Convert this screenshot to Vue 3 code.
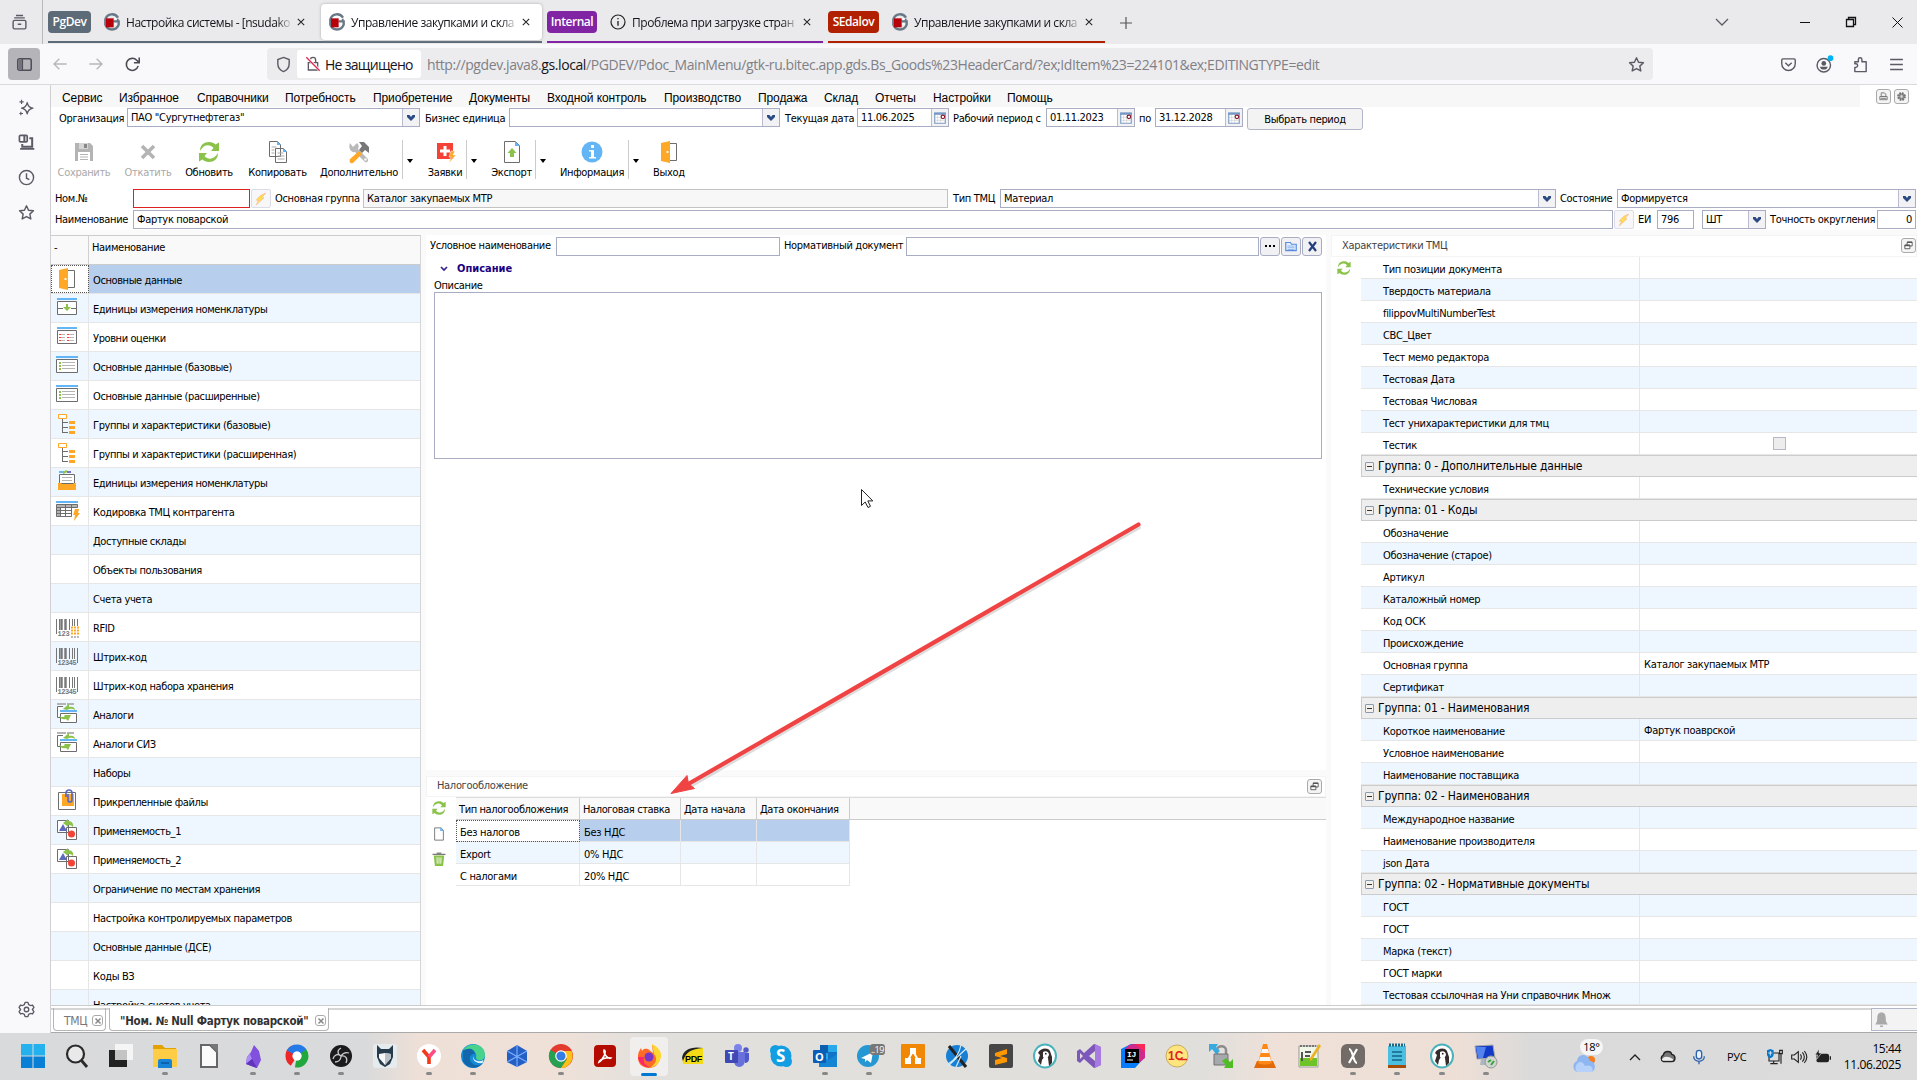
<script setup>
const tabs = [
  { group: 'PgDev', color: '#5d6a78', width: 494, gap: 5, items: [
    { icon: 'gs', title: 'Настройка системы - [nsudako' },
    { icon: 'gs', title: 'Управление закупками и скла', active: true } ] },
  { group: 'Internal', color: '#8124a4', width: 276, gap: 5, items: [{ icon: 'info', title: 'Проблема при загрузке стран' }] },
  { group: 'SEdalov', color: '#b12000', width: 277, gap: 5, items: [{ icon: 'gs', title: 'Управление закупками и скла' }] },
]
const menu = [['Сервис', 57], ['Избранное', 78], ['Справочники', 88], ['Потребность', 88], ['Приобретение', 96], ['Документы', 78], ['Входной контроль', 117], ['Производство', 94], ['Продажа', 66], ['Склад', 51], ['Отчеты', 58], ['Настройки', 74], ['Помощь', 60]]
const rows = [
  { cls: 'r1', items: [
    { k: 'label', t: 'Организация', w: 68, g: 8 }, { k: 'select', t: 'ПАО "Сургутнефтегаз"', w: 293 },
    { k: 'label', t: 'Бизнес единица', w: 84, g: 5 }, { k: 'select', t: '', w: 271 },
    { k: 'label', t: 'Текущая дата', w: 72, g: 5 }, { k: 'date', t: '11.06.2025', w: 92 },
    { k: 'label', t: 'Рабочий период с', w: 93, g: 4 }, { k: 'date', t: '01.11.2023', w: 89 },
    { k: 'label', t: 'по', w: 16, g: 4 }, { k: 'date', t: '31.12.2028', w: 88 },
    { k: 'btn', t: 'Выбрать период', w: 116, g: 4 } ] },
  { cls: 'r2', items: [
    { k: 'label', t: 'Ном.№', w: 78, g: 4 }, { k: 'input red', t: '', w: 117 }, { k: 'flash', w: 20, g: 1 },
    { k: 'label', t: 'Основная группа', w: 88, g: 4 }, { k: 'input ro', t: 'Каталог закупаемых МТР', w: 585 },
    { k: 'label', t: 'Тип ТМЦ', w: 47, g: 5 }, { k: 'select', t: 'Материал', w: 556 },
    { k: 'label', t: 'Состояние', w: 57, g: 4 }, { k: 'select', t: 'Формируется', w: 299 } ] },
  { cls: 'r3', items: [
    { k: 'label', t: 'Наименование', w: 78, g: 4 }, { k: 'input', t: 'Фартук поварской', w: 1480 }, { k: 'flash', w: 20, g: 1 },
    { k: 'label', t: 'ЕИ', w: 19, g: 4 }, { k: 'input', t: '796', w: 37 }, { k: 'select', t: 'ШТ', w: 64, g: 8 },
    { k: 'label', t: 'Точность округления', w: 107, g: 4 }, { k: 'input num', t: '0', w: 39 } ] },
]
const tools = [
  { t: 'Сохранить', i: 'save', w: 66, off: true, g: 0 }, { t: 'Откатить', i: 'cancel', w: 62, off: true }, { t: 'Обновить', i: 'refresh', w: 60 },
  { t: 'Копировать', i: 'copy', w: 77 }, { t: 'Дополнительно', i: 'tools', w: 86, d: 1 }, { t: 'Заявки', i: 'req', w: 42, g: 6, d: 1 },
  { t: 'Экспорт', i: 'export', w: 47, g: 6, d: 1 }, { t: 'Информация', i: 'about', w: 72, g: 5, d: 1 }, { t: 'Выход', i: 'door', w: 40, g: 5 },
]
const sections = [
  ['door', 'Основные данные'], ['units', 'Единицы измерения номенклатуры'], ['levels', 'Уровни оценки'], ['form', 'Основные данные (базовые)'],
  ['form', 'Основные данные (расширенные)'], ['tree', 'Группы и характеристики (базовые)'], ['tree', 'Группы и характеристики (расширенная)'],
  ['box', 'Единицы измерения номенклатуры'], ['grid', 'Кодировка ТМЦ контрагента'], ['', 'Доступные склады'], ['', 'Объекты пользования'], ['', 'Счета учета'],
  ['rfid', 'RFID'], ['bar', 'Штрих-код'], ['bar', 'Штрих-код набора хранения'], ['analog', 'Аналоги'], ['analog', 'Аналоги СИЗ'], ['', 'Наборы'],
  ['clip', 'Прикрепленные файлы'], ['apply', 'Применяемость_1'], ['apply', 'Применяемость_2'], ['', 'Ограничение по местам хранения'],
  ['', 'Настройка контролируемых параметров'], ['', 'Основные данные (ДСЕ)'], ['', 'Коды ВЗ'], ['', 'Настройка счетов учета'],
]
const props = [
  'Тип позиции документа', 'Твердость материала', 'filippovMultiNumberTest', 'СВС_Цвет', 'Тест мемо редактора', 'Тестовая Дата', 'Тестовая Числовая',
  'Тест унихарактеристики для тмц', 'Тестик', '#Группа: 0 - Дополнительные данные', 'Технические условия', '#Группа: 01 - Коды', 'Обозначение',
  'Обозначение (старое)', 'Артикул', 'Каталожный номер', 'Код ОСК', 'Происхождение', 'Основная группа', 'Сертификат', '#Группа: 01 - Наименования',
  'Короткое наименование', 'Условное наименование', 'Наименование поставщика', '#Группа: 02 - Наименования', 'Международное название',
  'Наименование производителя', 'json Дата', '#Группа: 02 - Нормативные документы', 'ГОСТ', 'ГОСТ', 'Марка (текст)', 'ГОСТ марки',
  'Тестовая ссылочная на Уни справочник Множ',
]
const values = { 'Основная группа': 'Каталог закупаемых МТР', 'Короткое наименование': 'Фартук поаврской' }
const taxes = [['Без налогов', 'Без НДС'], ['Export', '0% НДС'], ['С налогами', '20% НДС']]
const side = ['spark', 'devices', 'clock', 'star']
const apps = [['win'], ['search'], ['desk'], ['folder', 1], ['libre'], ['obsidian', 1], ['share', 1], ['obs', 1], ['wolf'], ['yandex', 1], ['edge', 1], ['gem'], ['chrome', 1], ['acrobat'], ['firefox', 2], ['pdf'], ['teams'], ['skype'], ['outlook', 1], ['telegram', 1], ['drawio'], ['dbtool'], ['sublime'], ['dbeaver'], ['vs'], ['idea'], ['onec'], ['winscp'], ['vlc'], ['npp'], ['xapp', 1], ['notepad', 1], ['dbeaver', 1], ['rdp', 1]]

const bars = 'M1.500 4v15M4.500 4v11M14.500 4v11M17.500 4v11M19.500 4v11M22.500 4v15'
const wideBars = 'M6.500 4v11M10.500 4v11'
const ico = {
  gs: '<path d="M21 5.500A10.500 10.500 0 0 0 2 8v8a10.500 10.500 0 0 0 20 0v-5h-8" fill="none" stroke="#697886" stroke-width="3.600"/><path d="M19 7l3 0v4h-3z" fill="#697886"/><path d="M3 6.500h11.500V20H3z" fill="#b8000b"/><path d="M16 7.500h3M16 15h2.500" stroke="#fff" stroke-width="2"/>',
  info: '<circle cx="12" cy="12" r="10.500" fill="none" stroke="#222" stroke-width="1.800"/><path d="M12 10.500v7M12 6v2" stroke="#222" stroke-width="2"/>',
  archive: '<path d="M5 9h14a2 2 0 0 1 2 2v8a2 2 0 0 1-2 2H5a2 2 0 0 1-2-2v-8a2 2 0 0 1 2-2zM4.500 5.500h15M7 2h10M9.500 14.500h5" fill="none" stroke="#5b5b66" stroke-width="2"/>',
  sidebar: '<rect x="2.500" y="4" width="19" height="16" rx="2.500" fill="none" stroke="#4f4f5a" stroke-width="2.200"/><path d="M4 5h4v14H4z" fill="#72727c"/><path d="M9 4v16" stroke="#4f4f5a" stroke-width="2"/>',
  back: '<path d="M22 12H3M11 4l-8 8 8 8" fill="none" stroke="#b6b6bc" stroke-width="2"/>',
  fwd: '<path d="M2 12h19M13 4l8 8-8 8" fill="none" stroke="#b6b6bc" stroke-width="2"/>',
  reload: '<path d="M20 14a8.500 8.500 0 1 1-2-8l3 3M21.500 2v7.500H14" fill="none" stroke="#4b4b55" stroke-width="2.200"/>',
  shield: '<path d="M12 2l8 3v6c0 5-3 9-8 11-5-2-8-6-8-11V5z" fill="none" stroke="#5b5b66" stroke-width="2"/>',
  lock: '<path d="M5 10h14v11H5zM8 10V6a4 4 0 0 1 8 0v4" fill="none" stroke="#5b5b66" stroke-width="2"/><path d="M3 2l19 20" stroke="#fff" stroke-width="4"/><path d="M2 2l20 20" stroke="#e22850" stroke-width="2"/>',
  star: '<path d="M12 2.500l2.900 6.300 6.900.800-5.100 4.700 1.400 6.800-6.100-3.400-6.100 3.400 1.400-6.800L2.200 9.600l6.900-.800z" fill="none" stroke="#5b5b66" stroke-width="2" stroke-linejoin="round"/>',
  pocket: '<path d="M4 4h16a1.500 1.500 0 0 1 1.500 1.500V11a9.500 9.500 0 0 1-19 0V5.500A1.500 1.500 0 0 1 4 4z" fill="none" stroke="#5b5b66" stroke-width="2"/><path d="M7.500 9.500l4.500 4.200 4.500-4.200" fill="none" stroke="#5b5b66" stroke-width="2"/>',
  account: '<circle cx="11" cy="13" r="9.500" fill="none" stroke="#5b5b66" stroke-width="2"/><circle cx="11" cy="10.500" r="3.300" fill="#5b5b66"/><path d="M5.500 15h11c-.5 3-2.500 4-5.500 4s-5-1-5.500-4z" fill="#5b5b66"/><circle cx="20.500" cy="3" r="4" fill="#00b3f4"/>',
  puzzle: '<path d="M4 21v-5h1.500a2.500 2.500 0 0 0 0-5H4V8h5V5a2.500 2.500 0 0 1 5 0v3h6v14H4z" fill="none" stroke="#5b5b66" stroke-width="2" stroke-linejoin="round"/>',
  burger: '<path d="M3 5h18M3 12h18M3 19h18" stroke="#5b5b66" stroke-width="2"/>',
  spark: '<path d="M13 5c1 5 3 7 8 8-5 1-7 3-8 8-1-5-3-7-8-8 5-1 7-3 8-8z" fill="none" stroke="#5b5b66" stroke-width="1.900" stroke-linejoin="round"/><path d="M5 1v6M2 4h6M4 18v5M2 20.500h5" stroke="#5b5b66" stroke-width="1.600"/>',
  devices: '<rect x="2" y="2" width="11" height="9" rx="1.500" fill="none" stroke="#5b5b66" stroke-width="2.400"/><path d="M9 2v9M16 6h4v12H6v-4M3 21h20" fill="none" stroke="#5b5b66" stroke-width="2.800"/>',
  clock: '<circle cx="12" cy="12" r="10" fill="none" stroke="#5b5b66" stroke-width="2"/><path d="M12 6v7l4 2" fill="none" stroke="#5b5b66" stroke-width="2"/>',
  gear: '<path d="M10 2h4l1 3 2.500 1.400 3-.7 2 3.400L20.300 12l2.200 2.900-2 3.400-3-.7L15 19l-1 3h-4l-1-3-2.500-1.400-3 .7-2-3.400L3.700 12 1.500 9.100l2-3.400 3 .7L9 5z" fill="none" stroke="#5b5b66" stroke-width="1.900" stroke-linejoin="round"/><circle cx="12" cy="12" r="3.200" fill="none" stroke="#5b5b66" stroke-width="1.900"/>',
  save: '<path d="M3 3h15l3 3v15H3z" fill="#b4b4b4"/><path d="M6 12h12v9H6z" fill="#fff"/><path d="M8 14.500h8M8 17h8M8 19.500h8" stroke="#b4b4b4"/><path d="M7 3h9v6H7z" fill="#d5d5d5"/><path d="M12 4h3v4h-3z" fill="#888"/>',
  cancel: '<path d="M6 6l12 12M18 6L6 18" stroke="#b4b4b4" stroke-width="3.600"/>',
  refresh: '<path d="M3 11C3 5 7 2 12 2c3 0 5 1 6.500 2.500L22 2.500V11h-8l2.500-3C13 4 7 4 3 11z" fill="#8bc34a"/><path d="M21 13c0 6-4 9-9 9-3 0-5-1-6.500-2.500L2 21.500V13h8l-2.500 3C11 20 17 20 21 13z" fill="#8bc34a"/>',
  copy: '<path d="M3.500 1.500h8l3 3v12h-11zM9.500 8.500h8l3 3v11h-11z" fill="#fff" stroke="#6d6d6d"/><path d="M11 1l4 4h-4zM17 8l4 4h-4z" fill="#64b5f6"/><path d="M5.500 7h5M5.500 10h3M5.500 13h3M11.500 13h6M11.500 16h7M11.500 19h7" stroke="#aaa"/>',
  tools: '<path d="M3 3l3 4 4-4c2 2 2 4 1 6l9 9c3 3-1 6-3 3l-9-9C4 13 1 8 3 3z" fill="#b9b9b9"/><path d="M12 11l3 3-9 9c-3 1-4-1-3-4z" fill="#ffa726"/><path d="M12 2h5l5 5v6l-4-3-3 3-3-3 3-4z" fill="#777"/><circle cx="18.500" cy="19.500" r="1.200" fill="#fff"/>',
  req: '<path d="M4 3h16v16H4z" fill="#f44336"/><path d="M12 6v10M7 11h10" stroke="#fff" stroke-width="3"/><path d="M18 11h4l-2 4h3l-7 8 2-6h-2z" fill="#ffa726" stroke="#fff" stroke-width=".5"/>',
  export: '<path d="M4.500 1.500h11l4 4v17h-15z" fill="#fff" stroke="#6d6d6d"/><path d="M15 1l5 5h-5z" fill="#64b5f6"/><path d="M12 8l4.500 5H14v4h-4v-4H7.500z" fill="#8bc34a"/>',
  about: '<circle cx="12" cy="12" r="10.500" fill="#64b5f6"/><path d="M11 5h3v3h-3zM9 10h5v7h2v1.500H9V17h2v-5.500H9z" fill="#fff"/>',
  door: '<path d="M12 3.500h7.500v17H12" fill="#fff" stroke="#6d6d6d"/><path d="M4 3l9-2v22l-9-2z" fill="#ffa726"/><path d="M9.500 11h2v2h-2z" fill="#fff"/>',
  units: '<path d="M2 3h20" stroke="#64b5f6" stroke-width="2"/><path d="M2.500 5.500h19v13h-19zM3 12.500h5M16 12.500h5" fill="#fff" stroke="#6d6d6d"/><path d="M11 8h2v3h3l-4 4-4-4h3z" fill="#8bc34a"/>',
  levels: '<path d="M2 3h20" stroke="#64b5f6" stroke-width="2"/><path d="M2.500 5.500h19v13h-19z" fill="#fff" stroke="#6d6d6d"/><path d="M6 9.500h4M6 12.500h4M6 15.500h4M14 9.500h5M14 12.500h5M14 15.500h5" stroke="#b9b9b9"/><path d="M4 9.500h2M4 12.500h2M4 15.500h2M12 9.500h2M12 12.500h2M12 15.500h2" stroke="#f44336"/>',
  form: '<path d="M1 3h22" stroke="#64b5f6" stroke-width="2"/><path d="M1.500 5.500h21v13h-21z" fill="#fff" stroke="#6d6d6d"/><path d="M7 8.500h13M7 11.500h13M7 14.500h13" stroke="#b4b4b4"/><path d="M4 9h2M4 12h2M4 15h2" stroke="#8bc34a" stroke-width="2"/>',
  tree: '<path d="M3.500 2.500h8v4h-8z" fill="#fff" stroke="#ffa726"/><path d="M7.500 7v14M8 10.500h5M8 15.500h5M8 20.500h5" stroke="#6d6d6d" fill="none"/><path d="M14 9h6v3h-6zM14 14h6v3h-6zM14 19h6v3h-6z" fill="#ffa726"/>',
  box: '<path d="M4 2h5" fill="none" stroke="#64b5f6" stroke-width="2"/><path d="M8 3l4-2" stroke="#8bc34a" stroke-width="2"/><path d="M12 2h4" stroke="#7e70c4" stroke-width="2"/><path d="M4.500 4.500h15v9h-15z" fill="#fff" stroke="#6d6d6d"/><path d="M7 7.500h10M7 10.500h10" stroke="#b4b4b4"/><path d="M3 13h3l1 1h11l1-1h2v7H3z" fill="#ffa726"/>',
  grid: '<path d="M1 3h22" stroke="#64b5f6" stroke-width="2"/><path d="M1.500 5.500h21v3h-21zM1.500 8.500h4v9h-4z" fill="#b4b4b4" stroke="#6d6d6d"/><path d="M5.500 8.500h11v9h-11zM1.500 11.500h15M1.500 14.500h15M10.500 5.500v12M16.500 5.500v3" fill="none" stroke="#6d6d6d"/><path d="M20 10h4l-1 4h2l-6 8 1-6h-2z" fill="#ffa726"/>',
  bar: `<path d="${bars}" stroke="#777"/><path d="${wideBars}" stroke="#777" stroke-width="2.400"/><text x="2.500" y="21" font-size="7" font-weight="bold" font-family="Liberation Mono,monospace" fill="#777" textLength="19">12345</text>`,
  rfid: `<path d="${bars}" stroke="#777"/><path d="${wideBars}" stroke="#777" stroke-width="2.400"/><path d="M15 11h9v11h-9z" fill="#fff"/><text x="2.500" y="21" font-size="7" font-weight="bold" font-family="Liberation Mono,monospace" fill="#777" textLength="12">123</text><path d="M16 12.500h8M16 15.500h8M16 18.500h8" stroke="#ffa726" stroke-width="2" stroke-dasharray="2 1"/><path d="M16 22h8" stroke="#777" stroke-dasharray="2 1"/>`,
  analog: '<path d="M2 2h17" stroke="#b4b4b4" stroke-width="2" stroke-dasharray="9 1"/><path d="M8 4.500H2.500v11H5M5.500 11.500h16v9h-16z" fill="#fff" stroke="#6d6d6d"/><path d="M5 9h17" stroke="#64b5f6" stroke-width="2"/><path d="M8 7l6-5v3c4-1 6 1 6 3-3-2-6-1-8 0zM4 13c2 3 5 2 6 1l-1-1h7l-3 6-2-2c-4 1-6-1-7-4z" fill="#8bc34a"/>',
  clip: '<path d="M3.500 3.500h17v17h-17z" fill="#fff" stroke="#6d6d6d"/><path d="M7 5h12v12H7z" fill="#ffa726"/><path d="M11 8V4a3 3 0 0 1 6 0v7a2 2 0 0 1-4 0V5" fill="none" stroke="#5c6bc0" stroke-width="1.700"/>',
  apply: '<path d="M2.500 2.500h11v12h-11zM11.500 9.500h10v12h-10z" fill="#fff" stroke="#6d6d6d"/><path d="M4 13l4-7 4 7z" fill="#5c6bc0"/><circle cx="16.500" cy="16" r="3.500" fill="#f44336"/><path d="M8 5l5-4v2c4 0 6 3 5 6-2-2-3-2-5-2v2z" fill="#8bc34a"/>',
  doc: '<path d="M4.500 1.500h11l4 4v17h-15z" fill="#fff" stroke="#6d6d6d" stroke-width="1.500"/><path d="M14 1l6 6h-6z" fill="#64b5f6"/>',
  trash: '<path d="M1 4h22" stroke="#6d6d6d" stroke-width="2"/><path d="M8 2h8" stroke="#6d6d6d" stroke-width="2"/><path d="M3 6h18l-2 18H5z" fill="#8bc34a"/><path d="M8.500 9l.5 11M12 9v11M15.500 9l-.5 11" stroke="#fff" stroke-width="1.500"/>',
  cal: '<path d="M3 4h18v17H3z" fill="#fff" stroke="#7c9cc4" stroke-width="2"/><path d="M2 4.500h20" stroke="#7598c6" stroke-width="4"/><path d="M4 11h16M4 16h16M8 7v13M13 7v13" stroke="#c9c9c9"/><circle cx="17" cy="10" r="3" fill="#fff" stroke="#8b1a2b" stroke-width="2"/>',
  flash: '<path d="M20 2l-7 8h4L4 22l4-8H4l7-8z" fill="#ffe14a" stroke="#f7b98a" stroke-width="1.300"/>',
  restore: '<path d="M9 5h11v8H9z" fill="#fff" stroke="#555" stroke-width="2"/><path d="M4 11h11v8H4z" fill="#fff" stroke="#555" stroke-width="2"/><path d="M9 5h11M4 12h11" stroke="#555" stroke-width="3"/>',
  print: '<path d="M7 4h7l3 3v5H7zM4 12h16v7H4zM6 16h12" fill="#eee" stroke="#777" stroke-width="2"/>',
  cog: '<circle cx="12" cy="12" r="7" fill="#999" stroke="#6f6f6f" stroke-width="5" stroke-dasharray="3.500 2"/><circle cx="12" cy="12" r="2.500" fill="#ddd"/>',
  list: '<path d="M3 6h8l2 3h8v11H3z" fill="#e3efff" stroke="#5b8ddb" stroke-width="2"/><path d="M6 12h12M6 15h12M6 18h12" stroke="#5b8ddb"/>',
  bell: '<path d="M12 2c-5 0-6 4-6 9 0 4-1 6-3 8h18c-2-2-3-4-3-8 0-5-1-9-6-9zM10 20.500h4v2h-4z" fill="#a9a9a9"/>',
  win: '<path d="M0 0h11.500v11.500H0zM12.500 0H24v11.500H12.500z" fill="#25b0ee"/><path d="M0 12.500h11.500V24H0zM12.500 12.500H24V24H12.500z" fill="#0a7fd6"/>',
  search: '<circle cx="10.500" cy="10" r="8.500" fill="#e9e9e9" stroke="#2a2a2a" stroke-width="2.200"/><path d="M16.500 16.500L22 23" stroke="#2a2a2a" stroke-width="2.800"/>',
  desk: '<path d="M0 6h18v17H0z" fill="#222"/><path d="M6 0h18v16H6z" fill="#f5f5f5"/><path d="M6 6h12v10H6z" fill="#c4c4c4"/>',
  folder: '<path d="M0 1h9l3 3h11v8H0z" fill="#e2a200"/><path d="M0 5h24v18H0z" fill="#ffcd45"/><path d="M5 24v-7a2 2 0 0 1 2-2h10a2 2 0 0 1 2 2v7z" fill="#1884d8"/><path d="M8 19h8" stroke="#075a9d" stroke-width="1.500"/>',
  libre: '<path d="M4 1h9l7 7v15H4z" fill="#fafafa" stroke="#666" stroke-width="2"/><path d="M13 0h8v9z" fill="#777"/>',
  obsidian: '<path d="M13 1l5 6 2 9-4 8-11-4 1-7 4-5z" fill="#8150dc"/><path d="M13 1l-4 9 2 5-6 5 1-7 4-5z" fill="#a98cf5"/><path d="M11 15l5 9-11-4z" fill="#6134bb"/>',
  share: '<circle cx="12" cy="12" r="8" fill="none" stroke="#ed2626" stroke-width="7" stroke-dasharray="17 33.300" stroke-dashoffset="-17"/><circle cx="12" cy="12" r="8" fill="none" stroke="#21a73c" stroke-width="7" stroke-dasharray="20 30.300" stroke-dashoffset="6"/><circle cx="12" cy="12" r="8" fill="none" stroke="#247ae7" stroke-width="7" stroke-dasharray="16 34.300" stroke-dashoffset="-29"/><circle cx="12" cy="12" r="4.500" fill="#fff"/>',
  obs: '<circle cx="12" cy="12" r="11" fill="#1b1b1d"/><path d="M12 4c-4 2-4 6 0 8 5-1 7 3 5 7M4 15c1-4 5-6 8-3M20 9c-3-1-6 0-8 3M12 12c0 4-3 6-6 6" fill="none" stroke="#c9c9c9" stroke-width="1.300"/>',
  wolf: '<rect width="24" height="24" rx="3" fill="#e6ebed"/><path d="M4 1l4 4h8l4-4v12l-3 7-5 3-5-3-3-7z" fill="#263b4b"/><path d="M12 9l6 1v4l-6 7-6-7v-4z" fill="#f8f8f8"/><path d="M12 9l6 1v4l-6 7z" fill="#b8c1c7"/>',
  yandex: '<circle cx="12" cy="12" r="12" fill="#fff"/><path d="M6 6l6 7v7" fill="none" stroke="#f33a18" stroke-width="3.600"/><path d="M12 13l6-7" stroke="#ff4b82" stroke-width="3.600"/>',
  edge: '<circle cx="12" cy="12" r="12" fill="#168bd5"/><path d="M2 6C8-3 24-1 24 11c0 6-8 7-9 3 2-6-4-9-13-8z" fill="#49d28c"/><path d="M2 7c5-4 12-2 12 3-5-1-7 5-3 9 3 3 7 3 11 0-5 7-16 6-20-2z" fill="#1267ac"/><path d="M12.500 12c-1 4 5 7 10 4l-1 3c-6 1-11-3-9-7z" fill="#dff4ff"/>',
  gem: '<path d="M12 1l10 6v11l-10 5-10-5V7z" fill="#245fc4"/><path d="M12 1v22M2 7l20 11M22 7L2 18" stroke="#79aaff" stroke-width="1.200"/>',
  chrome: '<circle cx="12" cy="12" r="12" fill="#e33b2e"/><path d="M12 12L1.500 6A12 12 0 0 0 12 24l6-9z" fill="#25a151"/><path d="M12 24A12 12 0 0 0 22.500 7H12l6 8z" fill="#fbc116"/><circle cx="12" cy="12" r="5.800" fill="#fff"/><circle cx="12" cy="12" r="4.600" fill="#347de5"/>',
  acrobat: '<rect x="1" y="1" width="22" height="22" rx="4" fill="#b30b00"/><path d="M6 18c1-3 8-5 12-4-2 2-8-4-7-8 3 0 0 9-5 12z" fill="none" stroke="#fff" stroke-width="1.500"/>',
  firefox: '<path d="M12 24C5 24 0 19 1 12c0-4 2-6 3-8l1 3c2-3 4-2 6-2l5 4-1-8c6 3 9 8 8 13-1 6-5 10-11 10z" fill="#ff6a26"/><path d="M15 0c8 4 11 10 8 16-2 5-6 7-11 8 7-3 9-10 5-14z" fill="#ffd530"/><path d="M1 13c1 7 7 11 13 10-7-1-8-6-7-10z" fill="#fb276a"/><circle cx="12" cy="13" r="4.500" fill="#7837c8"/>',
  pdf: '<path d="M2 20C0 10 5 4 22 4v16z" fill="#f3dc15"/><path d="M1 14C2 6 10 2 22 4 10 5 5 8 2 17z" fill="#222"/><text x="4" y="18" font-size="9" font-weight="bold" font-family="Liberation Sans,sans-serif" textLength="17">PDF</text>',
  teams: '<circle cx="13" cy="4" r="4" fill="#7b83eb"/><circle cx="21" cy="6" r="2.700" fill="#5059c9"/><path d="M9 8h11v8c0 9-11 9-11 1z" fill="#6870dc"/><path d="M20 9h4v6c0 4-4 4-4 4z" fill="#5059c9"/><rect y="6" width="13" height="13" rx="1" fill="#4048b4"/><text x="3" y="16" font-size="10" font-weight="bold" fill="#fff" font-family="Open Sans,sans-serif">T</text>',
  skype: '<circle cx="12" cy="12" r="10.500" fill="#139ee3"/><circle cx="6.500" cy="6.500" r="5.500" fill="#139ee3"/><circle cx="17.500" cy="17.500" r="5.500" fill="#139ee3"/><text x="7" y="18" font-size="17" font-weight="bold" fill="#fff" font-family="Open Sans,sans-serif">S</text>',
  outlook: '<path d="M7 1h17v15H7z" fill="#28a8ea"/><path d="M7 1h8v8H7z" fill="#0a5fae"/><path d="M15 8h9v8h-9z" fill="#1273c4"/><path d="M6 10l9 6 9-6v13H6z" fill="#1584d3"/><rect y="6" width="13" height="13" rx="1" fill="#0a5eb8"/><text x="2" y="16.500" font-size="11" font-weight="bold" fill="#fff" font-family="Open Sans,sans-serif">O</text>',
  telegram: '<circle cx="11" cy="12" r="11" fill="#2598d4"/><path d="M4 14l12-6-2 11-4-3-2 2v-3z" fill="#fff"/><rect x="13" y="0" width="15" height="11" rx="3" fill="#777"/><text x="14" y="9" font-size="9" fill="#fff" font-family="Open Sans,sans-serif" textLength="13">..19</text>',
  drawio: '<rect width="24" height="24" rx="1" fill="#f08705"/><path d="M12 7l-5 9M12 7l5 9" stroke="#fff" stroke-width="2"/><path d="M9 4h6v6H9zM4 14h6v6H4zM14 14h6v6h-6z" fill="#fff"/>',
  dbtool: '<circle cx="12" cy="12" r="11" fill="#1780d5"/><path d="M4 2l17 21" stroke="#222" stroke-width="3"/><path d="M3 20c7-4 11-9 13-19M3 22c7-6 13-13 19-18M16 12l-5 11" fill="none" stroke="#d4ebf8" stroke-width="1.200"/>',
  sublime: '<rect width="24" height="24" rx="2" fill="#464646"/><path d="M6 9l12-4v5l-7 2 7 2v4L6 21v-5l7-2-7-2z" fill="#ff9800"/>',
  dbeaver: '<ellipse cx="12" cy="12" rx="11" ry="11.500" fill="#fff" stroke="#49b2bc" stroke-width="2"/><path d="M5 9c2-5 10-6 12-2l2 6v6l-3 3-1-8-4-1-2 3-1 5-3-4 2-6z" fill="#342d2b"/><path d="M10 8c3-2 6 0 6 3l-2 4-4-2z" fill="#fff"/><path d="M12 9.500l1.500.5" stroke="#222" stroke-width="1.500"/>',
  vs: '<path d="M17 0l7 3v18l-7 3L7 15l-4 4-3-2V7l3-2 4 4zM3 9v6l3-3zM18 7l-6 5 6 5z" fill="#7d58ba" fill-rule="evenodd"/><path d="M18 0l6 3v18l-6 3z" fill="#a77be0"/>',
  idea: '<path d="M0 5L10 0h14v13L14 24H0z" fill="#087cfa"/><path d="M8 1l4-1h12v14L18 19V5H4z" fill="#d02b8c"/><path d="M14 0h10v8z" fill="#fe2857"/><path d="M4 5h14v14H4z" fill="#000"/><text x="6" y="13" font-size="8" font-weight="bold" fill="#fff" font-family="Liberation Mono,monospace">IJ</text><path d="M6 16h6" stroke="#fff"/>',
  onec: '<circle cx="12" cy="12" r="11" fill="#ffe57d" stroke="#c6ac65"/><text x="3" y="16" font-size="12" font-weight="bold" fill="#db251d" font-family="Liberation Sans,sans-serif" textLength="15">1С</text><path d="M13 15.500h9" stroke="#db251d" stroke-width="1.500"/>',
  winscp: '<path d="M8 10V6c0-5 9-5 9 0v4" fill="none" stroke="#8c8c8c" stroke-width="2.500"/><path d="M5 10h14v11H5z" fill="#a5a9ad" stroke="#707070"/><path d="M0 0h9L7 3l4 4-4 3-4-5-3 3z" fill="#36a9df"/><path d="M24 24h-9l2-3-4-4 4-3 4 4 3-3z" fill="#50bc24"/>',
  vlc: '<path d="M4 17h16l3 7H1z" fill="#e26a0a"/><path d="M10 0h4l5 19c-4 2-10 2-14 0z" fill="#ff8716"/><path d="M9 5h6l1 4H8zM7 13h10l1 4H6z" fill="#f7f7f7"/>',
  npp: '<path d="M2 2h19v21H2z" fill="#eff7e9" stroke="#999"/><path d="M3 14h17v8H3z" fill="#6dc328"/><path d="M5 8v9M8 8h6M8 12h5" stroke="#555" stroke-width="2"/><path d="M22 0l2 2-9 14-2 1v-3z" fill="#edb125"/><path d="M3 2h16" stroke="#777" stroke-width="2" stroke-dasharray="2 1"/>',
  xapp: '<rect width="24" height="24" rx="6" fill="#736b67"/><path d="M8 5c4 0 4 14 8 14M16 5L8 19" fill="none" stroke="#fff" stroke-width="2.200"/>',
  notepad: '<path d="M3 2h18v20H3z" fill="#4abfe2"/><path d="M3 21h18v3H3z" fill="#a54c0b"/><path d="M4 1h16" stroke="#17698a" stroke-width="3" stroke-dasharray="2 1"/><path d="M7 8h10M7 12h10M7 16h10" stroke="#176685" stroke-width="1.700"/>',
  rdp: '<path d="M1 2l18-1 2 13-18 1z" fill="#1339c7" stroke="#aaa"/><path d="M2 3l10 0-3 11H4z" fill="#5483ee"/><path d="M7 15l6 0 2 6H6z" fill="#aeb7bf"/><circle cx="17" cy="18" r="6" fill="#d1d5d1" stroke="#919991"/><path d="M14 18l3-2M17 21l3-4" stroke="#38a33a" stroke-width="2"/>',
  weather: '<circle cx="20" cy="11" r="4" fill="#f47d20"/><path d="M6 23a6 6 0 0 1 0-11c1-8 11-8 13 0 6 0 7 11 0 11z" fill="#8eb7f2"/><path d="M6 23a6 6 0 0 1 0-8c3-4 7-1 8 2 6-2 9 2 7 6z" fill="#b6d1fa"/>',
  cloud: '<path d="M6 19a5 5 0 0 1 0-9c2-7 11-6 12-1 6 1 6 10 0 10z" fill="#777" stroke="#222" stroke-width="2"/><path d="M4 17c1-5 8-7 16-1l-1 2H6z" fill="#eee"/>',
  mic: '<rect x="8" y="2" width="8" height="13" rx="4" fill="#e8f1ff" stroke="#2c62ad" stroke-width="2"/><path d="M4 11c0 10 16 10 16 0M12 18v5" fill="none" stroke="#2c62ad" stroke-width="2"/>',
  net: '<path d="M7 6h11v12H3v-6M10 18v4M5 22h11M21 8v14M19 2h4v5h-4z" fill="none" stroke="#222" stroke-width="1.700"/><path d="M0 2l5-2 5 2v6c0 3-2 5-5 6-3-1-5-3-5-6z" fill="#0877c9"/><path d="M5 3v7M2 6h6" stroke="#fff" stroke-width="1.200"/>',
  sound: '<path d="M1 9h4l6-5v16l-6-5H1zM14 8c2 2 2 6 0 8M17 5c4 4 4 10 0 14M20 3c5 6 5 12 0 18" fill="none" stroke="#222" stroke-width="1.700"/>',
  batt: '<rect x="3" y="8" width="17" height="11" rx="2" fill="#222" stroke="#222" stroke-width="2"/><path d="M23 11v5" stroke="#222" stroke-width="2"/><path d="M6 0L0 9h4l-2 7 8-10H6z" fill="#222" stroke="#dcdcdc"/>',
}
</script>

<template>
  <div class="screen">
    <header class="tabbar">
      <div class="tabhead"><svg class="i18" viewBox="0 0 24 24" v-html="ico.archive" /></div>
      <div v-for="g in tabs" :key="g.group" class="tabgroup" :style="{ width: g.width + 'px', borderColor: g.color, marginLeft: g.gap + 'px' }">
        <b class="badge" :class="g.group" :style="{ background: g.color }">{{ g.group }}</b>
        <div v-for="t in g.items" :key="t.title" class="tab" :class="{ active: t.active }">
          <svg class="i16" viewBox="0 0 24 24" v-html="ico[t.icon]" /><span>{{ t.title }}</span>
          <svg class="x" viewBox="0 0 10 10"><path d="M1 1l8 8M9 1L1 9" stroke="#222" stroke-width="1.300" /></svg>
        </div>
      </div>
      <svg class="plus" viewBox="0 0 12 12"><path d="M6 0v12M0 6h12" stroke="#555" stroke-width="1.200" /></svg>
      <div class="winbtns">
        <svg width="12" height="12" viewBox="0 0 12 12"><path d="M0 3l6 6 6-6" fill="none" stroke="#5b5b66" stroke-width="1.300" /></svg>
        <svg class="min" width="10" height="12" viewBox="0 0 10 12"><path d="M0 6.500h10" stroke="#111" /></svg>
        <svg width="12" height="12" viewBox="0 0 12 12"><path d="M1.500 3.500h7v7h-7zM3.500 3.500v-2h7v7h-2" fill="none" stroke="#111" stroke-width="1.300" /></svg>
        <svg width="11" height="11" viewBox="0 0 11 11"><path d="M.5.5l10 10M10.500.5l-10 10" stroke="#111" /></svg>
      </div>
    </header>

    <nav class="navbar">
      <span class="sidebtn"><svg class="i18" viewBox="0 0 24 24" v-html="ico.sidebar" /></span>
      <svg class="i16 n1" viewBox="0 0 24 24" v-html="ico.back" /><svg class="i16 n2" viewBox="0 0 24 24" v-html="ico.fwd" /><svg class="i18 n3" viewBox="0 0 24 24" v-html="ico.reload" />
      <div class="url">
        <svg class="i18" viewBox="0 0 24 24" v-html="ico.shield" />
        <span class="insecure"><svg class="i16" viewBox="0 0 24 24" v-html="ico.lock" /><span>Не защищено</span></span>
        <span class="addr">http://pgdev.java8.<b>gs.local</b>/PGDEV/Pdoc_MainMenu/gtk-ru.bitec.app.gds.Bs_Goods%23HeaderCard/?ex;IdItem%23=224101&amp;ex;EDITINGTYPE=edit</span>
        <svg class="i18" viewBox="0 0 24 24" v-html="ico.star" />
      </div>
      <div class="navicons"><svg v-for="n in ['pocket', 'account', 'puzzle', 'burger']" :key="n" class="i18" viewBox="0 0 24 24" v-html="ico[n]" /></div>
    </nav>

    <div class="body">
      <aside class="side">
        <svg v-for="s in side" :key="s" class="i18" viewBox="0 0 24 24" v-html="ico[s]" />
        <svg class="i18 gear" viewBox="0 0 24 24" v-html="ico.gear" />
      </aside>
      <main class="app">
        <div class="menu">
          <div class="menuitems"><span v-for="m in menu" :key="m[0]" :style="{ width: m[1] + 'px' }">{{ m[0] }}</span></div>
          <i class="mini"><svg viewBox="0 0 24 24" v-html="ico.print" /></i><i class="mini"><svg viewBox="0 0 24 24" v-html="ico.cog" /></i>
        </div>
        <template v-for="(r, ri) in rows" :key="r.cls">
          <div class="frow" :class="r.cls">
            <div v-for="(f, fi) in r.items" :key="fi" :class="f.k" :style="{ width: f.w + 'px', marginLeft: (f.g || 0) + 'px' }">
              <svg v-if="f.k === 'flash'" class="i14" viewBox="0 0 24 24" v-html="ico.flash" />
              <span v-else>{{ f.t }}</span>
              <i v-if="f.k === 'select'" class="dd"><svg width="8" height="6" viewBox="0 0 8 6"><path d="M0 0h2.500L4 2l1.500-2H8v2L4 6 0 2z" fill="#2b4a83" /></svg></i>
              <i v-if="f.k === 'date'" class="dd"><svg class="i14" viewBox="0 0 24 24" v-html="ico.cal" /></i>
            </div>
          </div>
          <div v-if="ri === 0" class="tools">
            <template v-for="t in tools" :key="t.t">
              <div class="tool" :class="{ off: t.off }" :style="{ width: t.w + 'px', marginLeft: (t.g || 0) + 'px' }"><svg class="i24" viewBox="0 0 24 24" v-html="ico[t.i]" /><span>{{ t.t }}</span></div>
              <div v-if="t.d" class="drop"><svg width="6" height="4" viewBox="0 0 6 4"><path d="M0 0h6L3 4z" /></svg></div>
            </template>
          </div>
        </template>

        <div class="main">
          <section class="nav">
            <div class="nh"><span>-</span><span>Наименование</span></div>
            <div v-for="(s, n) in sections" :key="n" class="nr" :class="{ sel: n === 0 }"><span class="ic"><svg v-if="s[0]" class="i24" viewBox="0 0 24 24" v-html="ico[s[0]]" /></span><span class="tx">{{ s[1] }}</span></div>
          </section>

          <section class="center">
            <div class="desc">
              <div class="dr">
                <span class="l1">Условное наименование</span><i class="inp a" /><span class="l2">Нормативный документ</span><i class="inp b" />
                <i class="sq"><svg width="12" height="3" viewBox="0 0 12 3"><path d="M1 0h2v2H1zM5 0h2v2H5zM9 0h2v2H9z" /></svg></i>
                <i class="sq"><svg class="i14" viewBox="0 0 24 24" v-html="ico.list" /></i>
                <i class="sq"><svg width="9" height="9" viewBox="0 0 9 9"><path d="M1 0l7 9M8 0L1 9" stroke="#233f80" stroke-width="2.200" /></svg></i>
              </div>
              <div class="dh"><svg width="8" height="6" viewBox="0 0 8 6"><path d="M1 1l3 3 3-3" fill="none" stroke="#32238b" stroke-width="1.700" /></svg><b>Описание</b></div>
              <div class="dl">Описание</div>
              <div class="memo" />
            </div>
            <div class="tax">
              <div class="ttl"><span>Налогообложение</span><i class="mini"><svg viewBox="0 0 24 24" v-html="ico.restore" /></i></div>
              <div class="tb">
                <div class="tt"><svg class="i16" viewBox="0 0 24 24" v-html="ico.refresh" /><svg class="i14" viewBox="0 0 24 24" v-html="ico.doc" /><svg class="i14" viewBox="0 0 24 24" v-html="ico.trash" /></div>
                <div class="tg">
                  <div class="th"><span>Тип налогообложения</span><span>Налоговая ставка</span><span>Дата начала</span><span>Дата окончания</span></div>
                  <div v-for="(x, n) in taxes" :key="n" class="tr" :class="{ sel: n === 0 }"><span>{{ x[0] }}</span><span>{{ x[1] }}</span><span /><span /></div>
                </div>
              </div>
            </div>
          </section>

          <section class="right">
            <div class="ttl"><span>Характеристики ТМЦ</span><i class="mini"><svg viewBox="0 0 24 24" v-html="ico.restore" /></i></div>
            <div class="rb">
              <svg class="i16 rr" viewBox="0 0 24 24" v-html="ico.refresh" />
              <div class="pg">
                <div v-for="(p, n) in props" :key="n" class="pr" :class="{ grp: p[0] === '#', odd: n % 2 }">
                  <template v-if="p[0] === '#'"><i class="minus" />{{ p.slice(1) }}</template>
                  <template v-else><span class="pn">{{ p }}</span><span class="pv">{{ values[p] }}<i v-if="p === 'Тестик'" class="chk" /></span></template>
                </div>
              </div>
            </div>
          </section>
        </div>

        <footer class="doctabs">
          <span class="dt">ТМЦ<i class="cx"><svg width="6" height="6" viewBox="0 0 6 6"><path d="M.5.5l5 5M5.500.5l-5 5" stroke="#888" stroke-width="1.500" /></svg></i></span>
          <span class="dt on">"Ном. № Null Фартук поварской"<i class="cx"><svg width="6" height="6" viewBox="0 0 6 6"><path d="M.5.5l5 5M5.500.5l-5 5" stroke="#888" stroke-width="1.500" /></svg></i></span>
          <span class="bell"><svg class="i18" viewBox="0 0 24 24" v-html="ico.bell" /></span>
        </footer>
      </main>
    </div>

    <div class="taskbar">
      <div class="apps"><div v-for="(a, n) in apps" :key="n" class="ap" :class="{ run: a[1] === 1, cur: a[1] === 2 }"><svg class="i24" viewBox="0 0 24 24" v-html="ico[a[0]]" /></div></div>
      <div class="tray">
        <span class="wx"><svg class="i24" viewBox="0 0 24 24" v-html="ico.weather" /><i>18°</i></span>
        <svg class="caret" width="12" height="8" viewBox="0 0 12 8"><path d="M1 7l5-5 5 5" fill="none" stroke="#222" stroke-width="1.400" /></svg>
        <svg class="i18 c" viewBox="0 0 24 24" v-html="ico.cloud" /><svg class="i16 m" viewBox="0 0 24 24" v-html="ico.mic" />
        <span class="lang">РУС</span>
        <svg class="i16" viewBox="0 0 24 24" v-html="ico.net" /><svg class="i16" viewBox="0 0 24 24" v-html="ico.sound" /><svg class="i16" viewBox="0 0 24 24" v-html="ico.batt" />
        <span class="time">15:44<br>11.06.2025</span>
      </div>
    </div>

    <svg class="overlay" width="1917" height="1080" viewBox="0 0 1917 1080">
      <path d="M1140 526L690 785.500" stroke="#777" stroke-opacity=".25" stroke-width="5" />
      <path d="M1138.500 524.500L690 783" stroke="#f04343" stroke-width="4.200" stroke-linecap="round" />
      <path d="M671 793.500L687 775.500l1.500 8 6 5z" fill="#f04343" stroke="#f04343" />
      <path d="M861.500 489.500v16l3.700-3.500 2.800 5.500 2.500-1.200-2.700-5.400h5z" fill="#fff" stroke="#222" />
    </svg>
  </div>
</template>

<style>
body { margin: 0; overflow: hidden; }
</style>
<style scoped>
* { box-sizing: border-box; }
i { font-style: normal; }
svg { flex: none; overflow: visible; display: block; }
.screen { width: 1917px; height: 1080px; display: flex; flex-direction: column; overflow: hidden; position: relative; font: 11px/14px "DejaVu Sans Condensed", "DejaVu Sans", sans-serif; font-variant-ligatures: none; letter-spacing: -0.32px; color: #000; background: #f9f9fb; white-space: nowrap; }
.i14 { width: 14px; height: 14px; }
.i16 { width: 16px; height: 16px; }
.i18 { width: 17px; height: 17px; }
.i24 { width: 24px; height: 24px; }

.tabbar { height: 44px; background: #eaeaec; display: flex; font: 12px/16px "Open Sans", sans-serif; letter-spacing: -0.45px; color: #15141a; }
.tabhead { width: 43px; border-right: 1px solid #b9b9bd; display: flex; align-items: center; padding-left: 11px; }
.tabgroup { height: 43px; border-bottom: 2px solid; display: flex; align-items: flex-start; }
.badge { height: 22px; margin-top: 11px; width: 43px; border-radius: 4px; color: #fff; text-align: center; line-height: 21px; font-weight: 600; }
.badge.Internal { width: 50px; }
.badge.SEdalov { width: 51px; }
.tab { height: 36px; width: 221px; margin-top: 4px; display: flex; align-items: center; padding: 0 12px 0 8px; gap: 6px; }
.tab:nth-child(2) { margin-left: 5px; }
.tab:nth-child(2):not(:last-child) { width: 225px; }
.tab.active { background: #fff; border-radius: 4px; box-shadow: 0 0 3px #aaa; }
.tab:last-child { margin-left: auto; }
.tab span { width: 167px; padding-top: 1px; -webkit-mask: linear-gradient(90deg, #000 90%, transparent); mask: linear-gradient(90deg, #000 90%, transparent); margin-right: -2px; }
.tab .x { width: 8px; height: 8px; }
.plus { width: 12px; height: 12px; margin: 17px 0 0 15px; }
.winbtns { margin-left: auto; display: flex; align-items: center; padding-right: 14px; }
.winbtns svg { margin-left: 35px; }
.winbtns .min { margin-left: 72px; }
.winbtns .min + svg { margin-left: 35px; }

.navbar { height: 41px; display: flex; align-items: center; border-bottom: 1px solid #d9d9de; padding-left: 8px; font: 14px/18px "Open Sans", sans-serif; }
.sidebtn { width: 32px; height: 32px; border-radius: 4px; background: #b5b5b9; display: flex; align-items: center; justify-content: center; }
.n1 { margin-left: 12px; }
.n2 { margin-left: 20px; }
.n3 { margin-left: 20px; }
.url { margin-left: 126px; width: 1386px; height: 32px; border-radius: 4px; background: #ececee; display: flex; align-items: center; padding: 0 8px; }
.insecure { margin-left: 5px; width: 124px; height: 28px; background: #fff; border-radius: 3px; display: flex; align-items: center; gap: 4px; padding-left: 8px; letter-spacing: -0.7px; color: #15141a; }
.insecure span { padding-top: 1px; }
.addr { margin-left: 6px; padding-top: 2px; flex: 1; color: #808086; letter-spacing: -0.41px; }
.addr b { color: #15141a; font-weight: 400; }
.navicons { margin-left: 127px; display: flex; gap: 19px; }

.body { display: flex; height: 948px; }
.side { width: 51px; border-right: 1px solid #cfcfd4; display: flex; flex-direction: column; align-items: center; padding: 14px 0 15px 2px; gap: 18px; }
.side .gear { margin-top: auto; }
.app { width: 1866px; background: #fff; display: flex; flex-direction: column; }
.menu { height: 22px; display: flex; align-items: center; gap: 3px; }
.menuitems { width: 1809px; height: 22px; margin-right: 13px; background: #f7f7f7; display: flex; align-items: center; padding: 4px 0 0 11px; font: 12px/16px "Liberation Sans", sans-serif; letter-spacing: -0.1px; }
.mini { width: 15px; height: 15px; border: 1px solid #aaa; border-radius: 3px; background: #f4f4f4; display: flex; align-items: center; justify-content: center; }
.mini svg { width: 11px; height: 11px; }
.frow { display: flex; height: 21px; align-items: flex-start; }
.frow > div { height: 19px; flex: none; display: flex; align-items: center; }
.frow span { padding-top: 1px; }
.r1 { height: 32px; padding-top: 1px; }
.r1 .label span { padding-top: 3px; }
.r3 { height: 25px; border-bottom: 5px solid #fafafa; }
.input, .select, .date { border: 1px solid #a9adc4; padding-left: 3px; background: #fff; }
.red { border-color: #d22; }
.ro { background: #f7f7f7; border-color: #c3c3c3; }
.num { justify-content: flex-end; padding-right: 3px; }
.dd { margin-left: auto; width: 17px; height: 17px; border-left: 1px solid #b9bccf; background: #f2f2f5; display: flex; align-items: center; justify-content: center; }
.flash { border: 1px solid #dcdce6; background: #f7f7f9; border-radius: 2px; justify-content: center; }
.frow > .btn { height: 22px; border: 1px solid #b3b6c8; border-radius: 3px; background: #f3f3f3; justify-content: center; padding-top: 1px; }
.tools { height: 50px; display: flex; }
.tool { display: flex; flex-direction: column; align-items: center; padding-top: 1px; gap: 2px; }
.tool.off { color: #a9a9a9; }
.drop { width: 16px; height: 39px; border-left: 1px solid #ccc; padding: 19px 0 0 4px; margin-top: 1px; }

.main { height: 771px; display: flex; background: #fafafa; overflow: hidden; border-bottom: 1px solid #ccc; }
.nav { width: 370px; border-right: 1px solid #d5d5d5; background: #fff; overflow: hidden; }
.nh { height: 30px; background: #f9f9f9; border-top: 1px solid #ccc; border-bottom: 1px solid #ccc; display: flex; align-items: center; padding-bottom: 4px; }
.nh span { padding-left: 3px; }
.nh span:first-child { width: 38px; border-right: 1px solid #d0d0d0; height: 28px; line-height: 24px; margin-bottom: -4px; }
.nr { height: 29px; display: flex; border-bottom: 1px solid #e6e6e6; }
.nr:nth-child(odd) { background: #eef7ff; }
.nr .ic { width: 38px; border-right: 1px solid #e6e6e6; padding: 2px 0 0 4px; }
.nr .tx { line-height: 28px; padding: 2px 0 0 4px; height: 28px; letter-spacing: -0.4px; flex: 1; overflow: hidden; }
.nr.sel .ic { outline: 1px dotted #555; outline-offset: -1px; }
.nr.sel .tx { background: #b8ceed; }
.center { width: 900px; margin-left: 5px; display: flex; flex-direction: column; gap: 6px; }
.desc { height: 535px; background: #fff; }
.dr { display: flex; align-items: center; padding: 1px 0 0 4px; height: 21px; }
.l1 { width: 126px; }
.inp { height: 19px; border: 1px solid #a9adc4; }
.inp.a { width: 224px; }
.l2 { width: 118px; margin: 0 4px; }
.inp.b { width: 353px; }
.sq { width: 20px; height: 19px; margin-left: 1px; border: 1px solid #a9adc4; border-radius: 3px; background: #f1f1f3; display: flex; align-items: center; justify-content: center; }
.dh { height: 22px; display: flex; align-items: center; padding: 3px 0 0 14px; gap: 9px; color: #1c007f; letter-spacing: 0; }
.dl { height: 14px; padding: 1px 0 0 8px; }
.memo { width: 888px; height: 167px; border: 1px solid #a9adc4; margin-left: 8px; }
.tax { flex: 1; background: #fff; }
.ttl { height: 21px; display: flex; align-items: center; padding: 0 3px 1px 10px; color: #444; justify-content: space-between; border: 1px solid #f4f4f4; }
.tb { display: flex; }
.tt { width: 30px; display: flex; flex-direction: column; align-items: center; gap: 11px; padding: 3px 4px 0 0; }
.tg { flex: 1; }
.th { height: 23px; background: #f9f9f9; border-top: 1px solid #ddd; border-bottom: 1px solid #ccc; display: flex; }
.tr { display: flex; height: 22px; }
.th span, .tr span { padding-left: 3px; line-height: 23px; width: 101px; border-right: 1px solid #ccc; }
.th span { height: 21px; letter-spacing: -0.4px; }
.tr span { border-color: #e6e6e6; border-bottom: 1px solid #e6e6e6; padding: 1px 0 0 4px; height: 22px; }
.tg span:nth-child(1) { width: 124px; }
.tg span:nth-child(3) { width: 76px; }
.tg span:nth-child(4) { width: 93px; }
.tr:nth-child(3) span { background: #eef7ff; }
.tr.sel span { background: #b8ceed; }
.tr.sel span:first-child { background: #fff; outline: 1px dotted #555; outline-offset: -1px; }
.right { width: 586px; margin-left: 5px; background: #fff; }
.right .ttl { height: 22px; padding-right: 0; }
.rb { display: flex; }
.rr { margin: 3px 9px 0 5px; }
.pg { width: 556px; }
.pr { height: 22px; display: flex; border-bottom: 1px solid #e6e6e6; line-height: 22px; }
.pr.odd { background: #eef7ff; }
.pn { width: 279px; padding: 2px 0 0 22px; height: 21px; border-right: 1px solid #e6e6e6; }
.pv { flex: 1; padding: 2px 0 0 4px; height: 21px; display: flex; align-items: center; line-height: 22px; }
.chk { width: 13px; height: 13px; border: 1px solid #b5b8c8; background: #ededed; margin: -3px auto 0 129px; }
.pr.grp { background: #eee; border: 1px solid #ccc; border-right: 0; font-size: 12px; line-height: 19px; align-items: center; letter-spacing: -0.18px; }
.minus { width: 9px; height: 9px; border: 1px solid #8a9bb0; border-radius: 1px; background: linear-gradient(#333, #333) center/5px 1px no-repeat, #f4f1ec; margin: 0 4px 0 3px; }
.doctabs { height: 27px; border-bottom: 1px solid #aaa; padding-top: 2px; display: flex; box-shadow: inset 0 2px #fff, inset 0 4px #d5d5d5; }
.dt { height: 23px; border: 1px solid #b5b5b5; border-top: 0; border-radius: 0 0 4px 4px; width: 53px; margin-left: 2px; display: flex; align-items: center; padding: 3px 2px 0 10px; justify-content: space-between; font-size: 12px; color: #777; }
.dt.on { width: 220px; margin-left: 3px; background: #fff; font-weight: 700; color: #333; font-size: 11.500px; letter-spacing: -0.25px; }
.cx { width: 11px; height: 11px; border: 1px solid #aaa; border-radius: 3px; display: flex; align-items: center; justify-content: center; }
.bell { margin-left: auto; width: 46px; height: 23px; border: 1px solid #b3b6c8; border-right: 0; background: #f3f3f3; padding: 2px 0 0 1px; }

.taskbar { height: 47px; display: flex; justify-content: space-between; background: linear-gradient(90deg, #d9dadb 0, #d9dadb 19%, #efe0d7 22%, #efe1d8 29%, #e2e0dd 34%, #e0dfdc 58%, #e1dfdc 63%, #f0e1d8 67%, #eedfd6 76%, #dadada 80%, #dcdcdd 100%); font-family: "Open Sans", sans-serif; }
.apps { display: flex; padding-left: 14px; gap: 6.030px; }
.ap { width: 38px; height: 39px; margin-top: 4px; padding: 7px 0 0 7px; border-radius: 4px; position: relative; }
.ap.cur { background: #f1efee; }
.ap.run::after, .ap.cur::after { content: ""; position: absolute; left: 16px; bottom: 1px; width: 6px; height: 3px; border-radius: 2px; background: #888; }
.ap.cur::after { left: 11px; width: 16px; background: #0078d4; bottom: 0; }
.tray { display: flex; align-items: center; padding-right: 16px; }
.wx { width: 34px; height: 32px; position: relative; padding-top: 8px; margin-right: 24px; }
.wx i { position: absolute; left: 9px; top: -2px; width: 23px; height: 16px; line-height: 16px; border-radius: 8px; background: #f6f6f6; text-align: center; }
.tray .c { margin-left: 18px; }
.tray .m { margin-left: 15px; }
.lang { margin: 0 20px 0 20px; width: 20px; font-size: 11px; }
.lang ~ svg { margin-right: 8px; }
.time { width: 62px; text-align: right; font-size: 12px; line-height: 16px; letter-spacing: -0.4px; }
.overlay { position: absolute; left: 0; top: 0; pointer-events: none; }
</style>
